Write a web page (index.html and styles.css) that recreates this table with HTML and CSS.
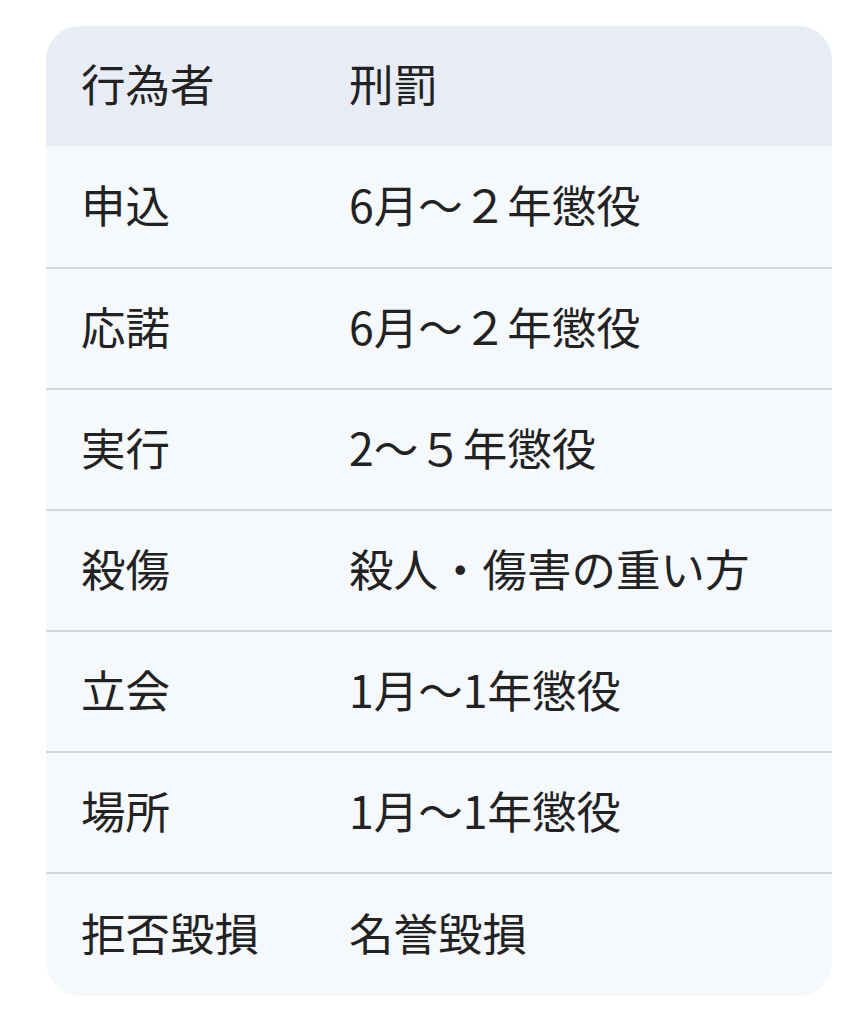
FILE: index.html
```html
<!DOCTYPE html>
<html lang="ja">
<head>
<meta charset="utf-8">
<link rel="stylesheet" href="styles.css">
</head>
<body>
<div class="card">
  <table class="penalty">
    <colgroup><col class="col1"><col class="col2"></colgroup>
    <thead>
      <tr><th>行為者</th><th>刑罰</th></tr>
    </thead>
    <tbody>
      <tr><td>申込</td><td>6月～２年懲役</td></tr>
      <tr><td>応諾</td><td>6月～２年懲役</td></tr>
      <tr><td>実行</td><td>2～５年懲役</td></tr>
      <tr><td>殺傷</td><td>殺人・傷害の重い方</td></tr>
      <tr><td>立会</td><td>1月～1年懲役</td></tr>
      <tr><td>場所</td><td>1月～1年懲役</td></tr>
      <tr><td>拒否毀損</td><td>名誉毀損</td></tr>
    </tbody>
  </table>
</div>
</body>
</html>
```
FILE: styles.css
```css
html, body {
  margin: 0;
  padding: 0;
  background: #ffffff;
}
body {
  font-family: "Noto Sans CJK JP", "Noto Sans", sans-serif;
  color: #222222;
  padding: 26px 0 0 46px;
}
.card {
  width: 786px;
  border-radius: 34px;
  overflow: hidden;
  background: #f5f9fc;
}
.penalty {
  width: 100%;
  table-layout: fixed;
  border-collapse: collapse;
  font-size: 44.5px;
  line-height: 1;
}
.penalty .col1 {
  width: 303px;
}
.penalty th, .penalty td {
  text-align: left;
  font-weight: 400;
  padding: 0 0 5px 35px;
  vertical-align: middle;
  white-space: nowrap;
}
.penalty th + th, .penalty td + td {
  padding-left: 0;
}
.penalty thead th {
  background: #e8ecf4;
  height: 115px;
}
.penalty tbody td {
  height: 114px;
}
.penalty tbody tr:first-child td {
  height: 116px;
}
.penalty tbody tr:last-child td {
  height: 117px;
}
.penalty tbody tr + tr td {
  border-top: 2px solid #d1d6da;
}
```
